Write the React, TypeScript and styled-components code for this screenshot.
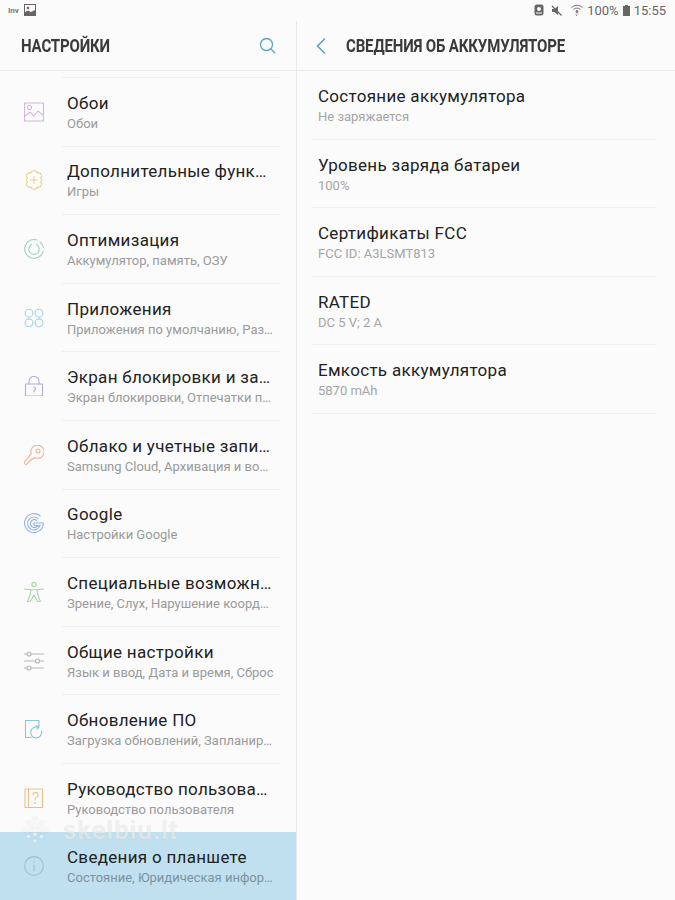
import { ReactNode } from 'react';
import styled, { createGlobalStyle } from 'styled-components';

const GlobalStyle = createGlobalStyle`
	html, body {
		margin: 0;
		padding: 0;
		background: #fbfbfb;
		font-family: Roboto, "Noto Sans", sans-serif;
	}
`;

const Screen = styled.div`
	position: relative;
	width: 675px;
	height: 900px;
	overflow: hidden;
	background: #fbfbfb;
	display: flex;
	flex-direction: column;
`;

const StatusBar = styled.div`
	height: 21px;
	flex: none;
	display: flex;
	align-items: center;
	justify-content: space-between;
	padding: 0 9px 1px 8px;
	color: #6c6c6c;
	box-sizing: border-box;
`;

const StatusGroup = styled.div<{ $gap: number }>`
	display: flex;
	align-items: center;
	gap: ${(props) => props.$gap}px;
`;

const StatusTiny = styled.span`
	font-size: 8px;
	font-weight: 700;
	color: #777;
`;

const StatusText = styled.span`
	font-size: 13px;
	color: #666;
`;

const Columns = styled.div`
	flex: 1;
	display: flex;
	min-height: 0;
`;

const LeftPanel = styled.div`
	width: 297px;
	flex: none;
	display: flex;
	flex-direction: column;
	border-right: 1px solid #e9e9e9;
	box-sizing: border-box;
`;

const RightPanel = styled.div`
	flex: 1;
	display: flex;
	flex-direction: column;
`;

const Header = styled.div<{ $padding: string; $justify?: string }>`
	height: 50px;
	flex: none;
	display: flex;
	align-items: center;
	box-sizing: border-box;
	border-bottom: 1px solid #ececec;
	padding: ${(props) => props.$padding};
	justify-content: ${(props) => props.$justify || 'flex-start'};
`;

const HeaderTitle = styled.h1<{ $gap?: number }>`
	margin: 0 0 0 ${(props) => props.$gap || 0}px;
	font-size: 18px;
	font-weight: 700;
	letter-spacing: -0.2px;
	color: #3a3a3a;
	white-space: nowrap;
	transform: scaleX(0.835);
	transform-origin: left center;
`;

const HeaderButton = styled.div`
	display: flex;
	align-items: center;
	color: #5aa3b8;
`;

const LeftList = styled.div`
	flex: 1;
	padding-top: 6px;
	min-height: 0;
	overflow: hidden;
`;

const MenuRow = styled.div<{ $active?: boolean }>`
	height: 68.6px;
	display: flex;
	align-items: center;
	padding-left: 24px;
	box-sizing: border-box;
	position: relative;
	background: ${(props) => (props.$active ? '#c0e0ef' : 'transparent')};
	&::before {
		content: '';
		position: absolute;
		left: 62px;
		right: 16px;
		top: 0;
		height: 1px;
		background: ${(props) => (props.$active ? 'transparent' : '#f0f0f0')};
	}
`;

const IconSlot = styled.div`
	width: 20px;
	height: 20px;
	flex: none;
	margin-right: 23px;
	margin-top: 1px;
	display: flex;
`;

const RowText = styled.div`
	width: 207.5px;
	min-width: 0;
	padding-top: 1px;
`;

const Title = styled.div`
	font-size: 17px;
	line-height: 22px;
	letter-spacing: 0.3px;
	color: #222;
	white-space: nowrap;
	overflow: hidden;
	text-overflow: ellipsis;
`;

const Subtitle = styled.div<{ $active?: boolean }>`
	font-size: 13px;
	line-height: 17px;
	margin-top: 1px;
	color: ${(props) => (props.$active ? '#7d929c' : '#9a9a9a')};
	white-space: nowrap;
	overflow: hidden;
	text-overflow: ellipsis;
`;

const DetailList = styled.div`
	padding: 0 18px 0 15px;
`;

const DetailRow = styled.div`
	height: 68.6px;
	box-sizing: border-box;
	padding: 14px 0 0 6px;
	border-bottom: 1px solid #f0f0f0;
`;

const DetailValue = styled.div`
	font-size: 13px;
	line-height: 17px;
	margin-top: 1px;
	color: #a5a5a5;
`;

const Watermark = styled.div`
	position: absolute;
	left: 22px;
	top: 815px;
	display: flex;
	align-items: center;
	gap: 15px;
	color: rgba(255, 255, 255, 0.6);
	font-size: 26px;
	font-weight: 500;
	letter-spacing: 1px;
	text-shadow: 0 0 1px rgba(0, 0, 0, 0.14);
	pointer-events: none;
	svg {
		filter: drop-shadow(0 0 1px rgba(0, 0, 0, 0.2));
	}
`;

const Line = ({ color, children }: { color: string; children: ReactNode }) => (
	<svg width="20" height="20" viewBox="0 0 20 20" fill="none" stroke={color} strokeWidth="1.1" strokeLinecap="round" strokeLinejoin="round">
		{children}
	</svg>
);

const icons: Record<string, ReactNode> = {
	wallpaper: (
		<Line color="#d3b8dc">
			<rect x="0.5" y="1" width="19" height="18" />
			<circle cx="5.5" cy="5.5" r="2" />
			<path d="M0.5 14.5 L6 10 L10 14 L14 9 L19.5 13.5" />
		</Line>
	),
	advanced: (
		<Line color="#eed28c">
			<path d="M6.8 3 C7 0 13 0 13.2 3 C15.8 1.4 19.4 6 16.6 7.6 C17.6 8.6 17.6 11.4 16.6 12.4 C19.4 14 15.8 18.6 13.2 17 C13 20 7 20 6.8 17 C4.2 18.6 0.6 14 3.4 12.4 C2.4 11.4 2.4 8.6 3.4 7.6 C0.6 6 4.2 1.4 6.8 3 Z" />
			<path d="M10 6.5 V13.5 M6.5 10 H13.5" />
		</Line>
	),
	optimize: (
		<Line color="#9fd2c4">
			<path d="M13 1 A9.4 9.4 0 1 0 19.2 12" />
			<path d="M19.4 8.5 A9.4 9.4 0 0 0 16 3" />
			<path d="M7.6 5.6 A5.2 5.2 0 1 0 12.4 5.6" />
		</Line>
	),
	apps: (
		<Line color="#a9cfe6">
			<circle cx="5" cy="5.2" r="3.9" />
			<circle cx="15" cy="5.2" r="3.9" />
			<circle cx="5" cy="14.8" r="3.9" />
			<circle cx="15" cy="14.8" r="3.9" />
		</Line>
	),
	lock: (
		<Line color="#b4aad6">
			<rect x="1.5" y="8" width="17" height="12" />
			<path d="M5 8 V5.5 A5 5 0 0 1 15 5.5 V8" />
			<path d="M10 11 A1.4 1.4 0 0 1 10 14 V16" />
		</Line>
	),
	key: (
		<Line color="#f0b591">
			<path d="M7.2 8.6 A6.6 6.6 0 1 1 11.6 13 L10 12.6 L8.8 14.2 L7.4 14 L6.8 15.6 L5.4 15.6 L3.4 18.6 A1.8 1.8 0 0 1 0.9 18.8 A1.8 1.8 0 0 1 1 16.2 Z" />
			<circle cx="14" cy="6" r="2" />
		</Line>
	),
	google: (
		<Line color="#90b5e2">
			<path d="M16.2 3 A9.4 9.4 0 1 0 19.4 10 H10 V12.6 H16" />
			<path d="M14.2 5.6 A6.4 6.4 0 1 0 16 12.6" />
			<path d="M12.6 7.2 A4 4 0 1 0 13.8 12.6" />
		</Line>
	),
	accessibility: (
		<Line color="#a9d2a4">
			<circle cx="10" cy="2.6" r="2.1" />
			<path d="M0.5 7 L6.8 7.8 H13.2 L19.5 7 M6.8 7.8 L6.4 12 L3.6 19.6 L6 20 L10 13 L14 20 L16.4 19.6 L13.6 12 L13.2 7.8" />
		</Line>
	),
	general: (
		<Line color="#b5b5b5">
			<path d="M0.5 3 H19.5 M0.5 10 H19.5 M0.5 17 H19.5" />
			<circle cx="5" cy="3" r="2" fill="#fbfbfb" />
			<circle cx="13.5" cy="10" r="2" fill="#fbfbfb" />
			<circle cx="5" cy="17" r="2" fill="#fbfbfb" />
		</Line>
	),
	update: (
		<Line color="#8cc3df">
			<path d="M7 18.5 H1.5 V1.5 H15 V7" />
			<path d="M17.5 12 A5.5 5.5 0 1 1 14 8.2" />
			<path d="M12.5 6.5 L15 8.3 L13 10.5" />
		</Line>
	),
	manual: (
		<Line color="#efbf8b">
			<rect x="1" y="1" width="17.5" height="18.5" />
			<path d="M4.5 1 V19.5" />
			<path d="M9 7 A2.6 2.6 0 1 1 12 9.5 C11 10.2 11 11 11 12" />
			<circle cx="11" cy="15" r="0.4" />
		</Line>
	),
	info: (
		<Line color="#9cbfcd">
			<circle cx="10" cy="10" r="9.4" />
			<path d="M10 9 V15 M10 5.5 V6.2" />
		</Line>
	)
};

const menu = [
	{ icon: 'wallpaper', title: 'Обои', sub: 'Обои' },
	{ icon: 'advanced', title: 'Дополнительные функции', sub: 'Игры' },
	{ icon: 'optimize', title: 'Оптимизация', sub: 'Аккумулятор, память, ОЗУ' },
	{ icon: 'apps', title: 'Приложения', sub: 'Приложения по умолчанию, Разрешения' },
	{ icon: 'lock', title: 'Экран блокировки и защита', sub: 'Экран блокировки, Отпечатки пальцев' },
	{ icon: 'key', title: 'Облако и учетные записи', sub: 'Samsung Cloud, Архивация и восстановление' },
	{ icon: 'google', title: 'Google', sub: 'Настройки Google' },
	{ icon: 'accessibility', title: 'Специальные возможности', sub: 'Зрение, Слух, Нарушение координации' },
	{ icon: 'general', title: 'Общие настройки', sub: 'Язык и ввод, Дата и время, Сброс' },
	{ icon: 'update', title: 'Обновление ПО', sub: 'Загрузка обновлений, Запланированные' },
	{ icon: 'manual', title: 'Руководство пользователя', sub: 'Руководство пользователя' },
	{ icon: 'info', title: 'Сведения о планшете', sub: 'Состояние, Юридическая информация', active: true }
];

const details = [
	{ title: 'Состояние аккумулятора', value: 'Не заряжается' },
	{ title: 'Уровень заряда батареи', value: '100%' },
	{ title: 'Сертификаты FCC', value: 'FCC ID: A3LSMT813' },
	{ title: 'RATED', value: 'DC 5 V; 2 A' },
	{ title: 'Емкость аккумулятора', value: '5870 mAh' }
];

const wmDots = [
	[12, 2], [6, 6], [18, 6], [12, 8], [2, 12], [8, 12], [16, 12], [22, 12], [12, 16], [6, 18], [18, 18], [12, 22]
];

export default function App() {
	return (
		<Screen>
			<GlobalStyle />
			<StatusBar>
				<StatusGroup $gap={5}>
					<StatusTiny>Inv</StatusTiny>
					<svg width="12" height="12" viewBox="0 0 12 12">
						<rect x="0.5" y="0.5" width="11" height="11" fill="none" stroke="#666" />
						<circle cx="4" cy="4" r="1.3" fill="#666" />
						<path d="M1 11 L1 8 L4 6.5 L7 8 L11 6 L11 11 Z" fill="#666" />
					</svg>
				</StatusGroup>
				<StatusGroup $gap={4}>
					<svg width="10" height="12" viewBox="0 0 10 12">
						<rect x="0.5" y="0.5" width="9" height="11" rx="2.5" fill="#666" />
						<circle cx="5" cy="5" r="2" fill="#fbfbfb" />
						<rect x="2" y="8.5" width="6" height="1" fill="#fbfbfb" />
					</svg>
					<svg width="11" height="11" viewBox="0 0 11 11" style={{ marginLeft: 3 }}>
						<path d="M1 4 H3.5 L7 1 V10 L3.5 7 H1 Z" fill="#666" />
						<path d="M1 1 L10.5 10.5" stroke="#666" strokeWidth="1.2" />
					</svg>
					<svg width="12" height="12" viewBox="0 0 12 12" fill="none" stroke="#777" style={{ marginLeft: 5 }}>
						<path d="M0.5 3.5 A8 8 0 0 1 11.5 3.5 M2.5 5.5 A5 5 0 0 1 9.5 5.5" />
						<circle cx="6" cy="7.5" r="1" fill="#777" />
						<path d="M4.5 10 H7.5 M5 11.5 H7" strokeDasharray="1 1" />
					</svg>
					<StatusText>100%</StatusText>
					<svg width="7" height="11" viewBox="0 0 7 11">
						<path d="M2 0 H5 V1 H7 V11 H0 V1 H2 Z" fill="#666" />
					</svg>
					<StatusText>15:55</StatusText>
				</StatusGroup>
			</StatusBar>
			<Columns>
				<LeftPanel>
					<Header $padding="0 20px 0 21px" $justify="space-between">
						<HeaderTitle>НАСТРОЙКИ</HeaderTitle>
						<HeaderButton>
							<svg width="17" height="17" viewBox="0 0 17 17" fill="none" stroke="currentColor" strokeWidth="1.3" strokeLinecap="round">
								<circle cx="7.5" cy="7.5" r="6" />
								<path d="M12 12 L15.8 15.8" />
							</svg>
						</HeaderButton>
					</Header>
					<LeftList>
						{menu.map((item) => (
							<MenuRow key={item.icon} $active={item.active}>
								<IconSlot>{icons[item.icon]}</IconSlot>
								<RowText>
									<Title>{item.title}</Title>
									<Subtitle $active={item.active}>{item.sub}</Subtitle>
								</RowText>
							</MenuRow>
						))}
					</LeftList>
				</LeftPanel>
				<RightPanel>
					<Header $padding="0 0 0 19px">
						<HeaderButton>
							<svg width="10" height="16" viewBox="0 0 10 16" fill="none" stroke="currentColor" strokeWidth="1.6" strokeLinecap="round" strokeLinejoin="round">
								<path d="M8.5 1 L1.5 8 L8.5 15" />
							</svg>
						</HeaderButton>
						<HeaderTitle $gap={20}>СВЕДЕНИЯ ОБ АККУМУЛЯТОРЕ</HeaderTitle>
					</Header>
					<DetailList>
						{details.map((item) => (
							<DetailRow key={item.title}>
								<Title>{item.title}</Title>
								<DetailValue>{item.value}</DetailValue>
							</DetailRow>
						))}
					</DetailList>
				</RightPanel>
			</Columns>
			<Watermark>
				<svg width="26" height="26" viewBox="0 0 24 24" fill="currentColor">
					{wmDots.map(([cx, cy]) => (
						<circle key={`${cx}-${cy}`} cx={cx} cy={cy} r="1.8" />
					))}
				</svg>
				skelbiu.lt
			</Watermark>
		</Screen>
	);
}
